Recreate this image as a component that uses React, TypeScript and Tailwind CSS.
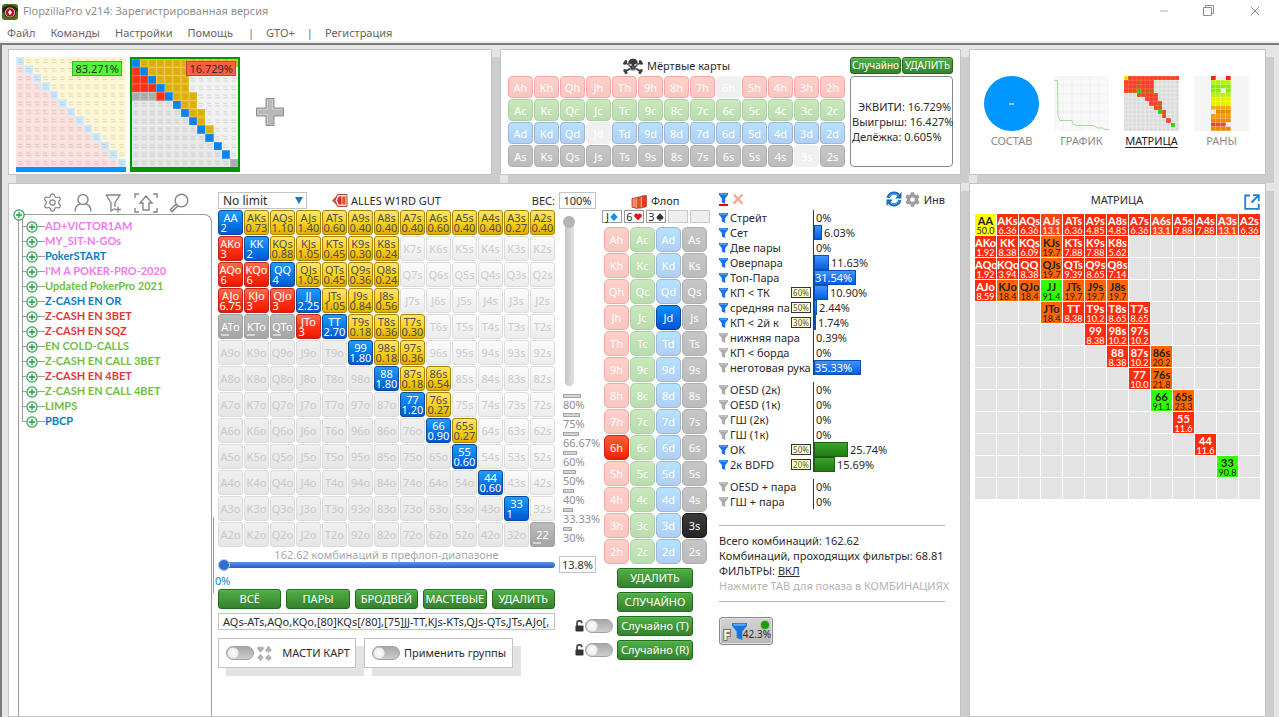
import React from 'react';
import { FaCog } from 'react-icons/fa';
import { Minus, Settings, X } from 'lucide-react';

const RANKS = ['A', 'K', 'Q', 'J', 'T', '9', '8', '7', '6', '5', '4', '3', '2'];
const SUITS = ['h', 'c', 'd', 's'];

const handName = (row: number, col: number) => {
  if (row === col) return RANKS[row] + RANKS[row];
  return row < col ? RANKS[row] + RANKS[col] + 's' : RANKS[col] + RANKS[row] + 'o';
};

// Each row starts at the given column; "-" marks a hand with a zero weight.
const RANGE: [number, string][] = [
  [0, '2 0.73 1.10 1.40 0.60 0.40 0.40 0.40 0.60 0.40 0.40 0.27 0.40'],
  [0, '3 2 0.88 1.05 0.45 0.30 0.24'],
  [0, '6 6 4 1.05 0.45 0.36 0.24'],
  [0, '6.75 3 3 2.25 1.05 0.84 0.56'],
  [0, '- - - 3 2.70 0.18 0.36 0.30'],
  [5, '1.80 0.18 0.36'],
  [6, '1.80 0.18 0.54'],
  [7, '1.20 0.27'],
  [8, '0.90 0.27'],
  [9, '0.60'],
  [10, '0.60'],
  [11, '1'],
  [12, '-'],
];

const MATRIX: [number, string][] = [
  [0, '50.0 6.36 6.36 13.1 6.36 4.85 4.85 6.36 13.1 7.88 7.88 13.1 6.36'],
  [0, '1.92 8.38 6.09 19.7 7.88 7.88 5.62'],
  [0, '1.92 3.94 8.38 19.7 9.39 8.65 7.14'],
  [0, '8.59 18.4 18.4 91.4 19.7 19.7 19.7'],
  [3, '18.4 8.38 10.2 8.65 8.65'],
  [5, '8.38 10.2 10.2'],
  [6, '8.38 10.2 20.2'],
  [7, '10.0 21.8'],
  [8, '91.1 23.3'],
  [9, '11.6'],
  [10, '11.6'],
  [11, '90.8'],
  [13, ''],
];

const valueAt = (data: [number, string][], row: number, col: number): string | undefined => {
  const [start, list] = data[row];
  return list.split(' ')[col - start] || undefined;
};

const heatClass = (v?: string) => {
  if (!v) return 'bg-[#e3e3e3]';
  const n = parseFloat(v);
  if (n > 80) return 'bg-[#33ff00] text-[#222]';
  if (n >= 50) return 'bg-[#ffff00] text-[#222]';
  if (n > 18) return 'bg-[#ff6600] text-[#222]';
  if (n > 12) return 'bg-[#ff4418] text-white';
  return 'bg-[#ff2d0c] text-white';
};

const rangeClass = (row: number, col: number, v?: string) => {
  if (v === '-') return 'border-[#a0a0a0] bg-linear-to-b from-[#bdbdbd] to-[#a4a4a4] text-white';
  if (!v)
    return row < col
      ? 'border-[#dcdcdc] bg-linear-to-b from-[#fbfbfb] to-[#ececec] text-[#cbcbcb]'
      : 'border-[#dadada] bg-linear-to-b from-[#f0f0f0] to-[#e6e6e6] text-[#c8c8c8]';
  if (row === col) return 'border-[#0c4a9c] bg-linear-to-b from-[#1e9cff] to-[#0058d2] text-white';
  if (row < col) return 'border-[#ab8200] bg-linear-to-b from-[#ffe566] via-[#fbd21c] to-[#e0ac00] text-[#4d4d4d]';
  return 'border-[#c0241a] bg-linear-to-b from-[#ff6a4c] via-[#ff3413] to-[#ea1800] text-white';
};

const CARD_CLASS: Record<string, string> = {
  h: 'border-[#f0a9a5] bg-linear-to-b from-[#ffd0c8] to-[#f9c5c0]',
  c: 'border-[#b0d0a8] bg-linear-to-b from-[#cae8bb] to-[#b9dcae]',
  d: 'border-[#a0b4d4] bg-linear-to-b from-[#b4e2ff] to-[#b0cff4]',
  s: 'border-[#adadad] bg-linear-to-b from-[#c6c6c6] to-[#bcbcbc]',
};
const PICKED: Record<string, string> = {
  Jd: 'border-[#0c4a9c] bg-linear-to-b from-[#0a90ff] to-[#0054d4]',
  '6h': 'border-[#d02010] bg-linear-to-b from-[#ff5a36] to-[#f01c00]',
  '3s': 'border-[#1a1a1a] bg-linear-to-b from-[#3a3a3a] to-[#262626]',
};

const SUIT_PATH: Record<string, string> = {
  h: 'M5 9.5L0.9 5A2.5 2.5 0 0 1 5 1.8A2.5 2.5 0 0 1 9.1 5Z',
  d: 'M5 0L9.6 5L5 10L0.4 5Z',
  s: 'M5 0.3L8.9 4.5A2.3 2.3 0 0 1 5.6 7.6L6.6 9.6H3.4L4.4 7.6A2.3 2.3 0 0 1 1.1 4.5Z',
  c: 'M5 0.3A2.1 2.1 0 0 1 6.7 3.7A2.2 2.2 0 1 1 5.6 7.3L6.6 9.6H3.4L4.4 7.3A2.2 2.2 0 1 1 3.3 3.7A2.1 2.1 0 0 1 5 0.3Z',
};

function Suit({ suit, className }: { suit: string; className: string }) {
  return (
    <svg viewBox="0 0 10 10" className={className} fill="currentColor" aria-hidden="true">
      <path d={SUIT_PATH[suit]} />
    </svg>
  );
}

function Funnel({ on, className }: { on: boolean; className: string }) {
  return (
    <svg viewBox="0 0 16 18" className={className} preserveAspectRatio="none" aria-hidden="true">
      <path d="M0 0H16V3L11 9V18L5 15.5V9L0 3Z" fill={on ? '#1673e6' : '#acacac'} />
      <path d="M1 0.8H15L14 3H2Z" fill={on ? '#5aa8ff' : '#c8c8c8'} />
    </svg>
  );
}

function Plus() {
  return (
    <svg viewBox="0 0 12 12" className="size-3 shrink-0" aria-hidden="true">
      <circle cx="6" cy="6" r="5.1" fill="#f4f8f4" stroke="#2e9e4f" strokeWidth="1.2" />
      <path d="M6 3V9M3 6H9" stroke="#1f9a44" strokeWidth="1.3" />
    </svg>
  );
}

function Panel({ children, className = '' }: { children: React.ReactNode; className?: string }) {
  return <section className={'min-w-0 border border-[#c3c3c3] bg-white shadow-[8px_8px_0_#cdcdcd] ' + className}>{children}</section>;
}

function GreenButton({ children, className = '' }: { children: React.ReactNode; className?: string }) {
  return (
    <button
      className={
        'rounded-[3px] border border-[#1f6b1c] bg-linear-to-b from-[#4fb043] to-[#378030] text-center whitespace-nowrap text-white shadow-[inset_0_1px_0_#5fb855] ' +
        className
      }
    >
      {children}
    </button>
  );
}

function Toggle({ label }: { label: string }) {
  return (
    <input
      type="checkbox"
      role="switch"
      aria-label={label}
      className="h-3.5 w-7 shrink-0 appearance-none rounded-full border border-[#a2a2a2] bg-[radial-gradient(circle_at_6px_50%,#fdfdfd_0,#ececec_5px,#ffffff00_6px),linear-gradient(#a8a8a8,#cccccc)]"
    />
  );
}

const TREE: [string, string][] = [
  ['AD+VICTOR1AM', 'text-[#f07af0]'],
  ['MY_SIT-N-GOs', 'text-[#f07af0]'],
  ['PokerSTART', 'text-[#0a7cc8]'],
  ["I'M A POKER-PRO-2020", 'text-[#f07af0]'],
  ['Updated PokerPro 2021', 'text-[#72bf44]'],
  ['Z-CASH EN OR', 'text-[#0a7cc8]'],
  ['Z-CASH EN 3BET', 'text-[#dd3a3a]'],
  ['Z-CASH EN SQZ', 'text-[#dd3a3a]'],
  ['EN COLD-CALLS', 'text-[#72bf44]'],
  ['Z-CASH EN CALL 3BET', 'text-[#72bf44]'],
  ['Z-CASH EN 4BET', 'text-[#dd3a3a]'],
  ['Z-CASH EN CALL 4BET', 'text-[#72bf44]'],
  ['LIMPS', 'text-[#72bf44]'],
  ['PBCP', 'text-[#0a7cc8]'],
];

function Tree() {
  return (
    <aside className="flex w-[203px] shrink-0 flex-col pl-[9px]">
      <div className="flex h-[30px] items-end gap-[11px] pb-px pl-6 text-[#858585]">
        <Settings className="size-[21px]" strokeWidth={1.4} />
        <svg viewBox="0 0 18 20" className="h-5 w-[18px]" fill="none" stroke="currentColor" strokeWidth="1.4" aria-hidden="true">
          <circle cx="9" cy="6.5" r="5" />
          <path d="M1 18.5C1.2 13.5 4 11.5 6 11M17 18.5C16.8 13.5 14 11.5 12 11" />
        </svg>
        <svg viewBox="0 0 20 20" className="size-5" fill="none" stroke="currentColor" strokeWidth="1.3" aria-hidden="true">
          <path d="M3 2H17L12 9.5V14M3 2L8 9.5V18L12 15.5M12 16.5H18M15 13.5V19.5" />
        </svg>
        <svg viewBox="0 0 24 20" className="h-5 w-6" fill="none" stroke="currentColor" strokeWidth="1.4" aria-hidden="true">
          <path d="M1 5V1H5M19 1H23V5M23 15V19H19M5 19H1V15M12 3L18 10H15V17H9V10H6Z" />
        </svg>
        <svg viewBox="0 0 20 20" className="size-5" fill="none" stroke="currentColor" strokeWidth="1.4" aria-hidden="true">
          <circle cx="12.5" cy="7.5" r="6.3" />
          <path d="M7.2 11.2L1.4 16.6L3 18.6L8.9 13" />
        </svg>
      </div>
      <div className="relative grow rounded-tr-lg border-t border-r border-l border-[#9c9c9c] pt-1">
        <span className="absolute -top-[6px] -left-[6px]">
          <Plus />
        </span>
        <span className="absolute top-[302px] -right-[3px] h-[76px] w-[3px] border-r border-[#9c9c9c]" />
        <ul className="relative pl-[3px]">
          {TREE.map(([name, color], i) => (
            <li key={name} className="flex h-[15px] items-center">
              <span className={'w-px self-start bg-[#9c9c9c] ' + (i === TREE.length - 1 ? 'h-2' : 'h-[15px]')} />
              <span className="h-px w-[3px] bg-[#9c9c9c]" />
              <Plus />
              <span className="h-px w-[7px] bg-[#9c9c9c]" />
              <span className={'font-[Lato] text-[11px] font-bold whitespace-nowrap ' + color}>{name}</span>
            </li>
          ))}
        </ul>
      </div>
    </aside>
  );
}

const WEIGHTS: [string, string][] = [
  ['80%', 'w-[18px]'],
  ['75%', 'w-[17px]'],
  ['66.67%', 'w-4'],
  ['60%', 'w-3.5'],
  ['50%', 'w-[13px]'],
  ['40%', 'w-[11px]'],
  ['33.33%', 'w-2.5'],
  ['30%', 'w-[9px]'],
];

function RangeEditor() {
  return (
    <div className="grid shrink-0 grid-cols-[337px_38px] content-start gap-x-1 pt-2 pl-1.5">
      <div className="flex h-[18px] items-start">
        <div className="relative">
          <select aria-label="Лимит" className="block h-[17px] w-[89px] appearance-none border border-[#c3c3c3] bg-white pl-1 text-xs leading-3">
            <option>No limit</option>
          </select>
          <svg viewBox="0 0 8 7" className="pointer-events-none absolute top-[5px] right-1 h-[7px] w-2" aria-hidden="true">
            <path d="M0 0H8L4 7Z" fill="#0a7cc8" />
          </svg>
        </div>
        <svg viewBox="0 0 16 13" className="mt-0.5 ml-[25px] h-[13px] w-4" aria-hidden="true">
          <path d="M0 6.5L6 0.5V12.5Z" fill="#c8503c" />
          <path d="M5.5 0.5H15V12.5H5.5L3 6.5Z" fill="#f4ded8" stroke="#b04a3a" />
          <path d="M7 2.5H9.5V10.5H7L5 6.5Z" fill="#e22c10" />
          <path d="M10.3 2.5H13.5V10.5H10.3Z" fill="#ff4a1c" />
        </svg>
        <span className="ml-[3px] grow leading-[17px] whitespace-nowrap">ALLES W1RD GUT</span>
        <label htmlFor="weight" className="leading-[17px]">ВЕС:</label>
      </div>
      <input id="weight" defaultValue="100%" className="h-[17px] w-[37px] border border-[#c3c3c3] text-center" />

      <div className="grid grid-cols-[repeat(13,25px)] gap-px">
        {RANKS.map((_, r) =>
          RANKS.map((_, c) => {
            const v = valueAt(RANGE, r, c);
            const active = v && v !== '-';
            return (
              <button
                key={handName(r, c)}
                className={'relative flex h-[25px] flex-col items-center justify-center rounded-[3px] border leading-[10px] ' + rangeClass(r, c, v)}
              >
                <span>{handName(r, c)}</span>
                {active && <span className={v.length === 1 ? 'w-5 text-left' : ''}>{v}</span>}
                {v === '-' && <span className="absolute bottom-0.5 left-0.5 h-0.5 w-2 bg-[#d6d6d6]" />}
              </button>
            );
          }),
        )}
      </div>
      <div className="flex flex-col pt-1.5 pl-1">
        <input
          type="range"
          aria-label="Вес"
          defaultValue={100}
          className="h-[170px] w-3 appearance-none rounded-full bg-transparent [direction:rtl] [writing-mode:vertical-lr] [&::-webkit-slider-runnable-track]:w-[9px] [&::-webkit-slider-runnable-track]:rounded-full [&::-webkit-slider-runnable-track]:bg-linear-to-r [&::-webkit-slider-runnable-track]:from-[#c4c4c4] [&::-webkit-slider-runnable-track]:to-[#e2e2e2] [&::-webkit-slider-thumb]:-ml-[2px] [&::-webkit-slider-thumb]:size-3 [&::-webkit-slider-thumb]:appearance-none [&::-webkit-slider-thumb]:rounded-full [&::-webkit-slider-thumb]:bg-[#b4b4b4]"
        />
        <ul className="mt-2 text-[11px] text-[#8f8f8f]">
          {WEIGHTS.map(([t, w]) => (
            <li key={t} className="h-[19px]">
              <span className={'block h-1 border border-[#a6a6a6] bg-[#d6d6d6] ' + w} />
              <span className="block leading-[13px]">{t}</span>
            </li>
          ))}
        </ul>
      </div>

      <div className="pt-0.5 text-center text-[#a8a8a8]">
        <div className="h-3 leading-3">162.62 комбинаций в префлоп-диапазоне</div>
        <input
          type="range"
          aria-label="Диапазон"
          defaultValue={0}
          className="block h-2 w-full appearance-none bg-transparent [&::-webkit-slider-runnable-track]:h-[6px] [&::-webkit-slider-runnable-track]:rounded-full [&::-webkit-slider-runnable-track]:bg-linear-to-b [&::-webkit-slider-runnable-track]:from-[#5a96e8] [&::-webkit-slider-runnable-track]:to-[#2060c4] [&::-webkit-slider-thumb]:-mt-[3px] [&::-webkit-slider-thumb]:size-3 [&::-webkit-slider-thumb]:appearance-none [&::-webkit-slider-thumb]:rounded-full [&::-webkit-slider-thumb]:border [&::-webkit-slider-thumb]:border-[#c0ccdd] [&::-webkit-slider-thumb]:bg-[#2f6fd4]"
        />
      </div>
      <input aria-label="Процент" defaultValue="13.8%" className="mt-[9px] h-[17px] w-[37px] border border-[#c3c3c3] text-center" />

      <div className="col-span-2 -ml-[3px] h-4 leading-[15px] text-[#0a84d0]">0%</div>
      <div className="grid grid-cols-5 gap-[5px]">
        {['ВСЁ', 'ПАРЫ', 'БРОДВЕЙ', 'МАСТЕВЫЕ', 'УДАЛИТЬ'].map((t) => (
          <GreenButton key={t} className="h-5 leading-[18px]">{t}</GreenButton>
        ))}
      </div>
      <span />
      <input
        aria-label="Текст диапазона"
        defaultValue="AQs-ATs,AQo,KQo,[80]KQs[/80],[75]JJ-TT,KJs-KTs,QJs-QTs,JTs,AJo[,"
        className="mt-1 h-[17px] w-full border border-[#c3c3c3] pl-1 text-[11px]"
      />
      <span />
      <div className="mt-2 flex gap-2">
        <label className="flex h-[30px] w-[138px] items-center border border-[#c3c3c3] bg-white pl-[7px] shadow-[8px_8px_0_#e3e3e3]">
          <Toggle label="МАСТИ КАРТ" />
          <span className="ml-[3px] grid grid-cols-2 gap-px text-[#b0b0b0]">
            <Suit suit="h" className="size-[7px]" />
            <Suit suit="c" className="size-[7px]" />
            <Suit suit="d" className="size-[7px]" />
            <Suit suit="s" className="size-[7px]" />
          </span>
          <span className="ml-auto pr-[5px] whitespace-nowrap">МАСТИ КАРТ</span>
        </label>
        <label className="flex h-[30px] w-[149px] items-center gap-1 border border-[#c3c3c3] bg-white pl-[7px] whitespace-nowrap shadow-[8px_8px_0_#e3e3e3]">
          <Toggle label="Применить группы" />
          Применить группы
        </label>
      </div>
    </div>
  );
}

function Lock() {
  return (
    <svg viewBox="0 0 9 12" className="h-3 w-[9px]" aria-hidden="true">
      <path d="M2 6V3.2A2.3 2.3 0 0 1 6.8 3.2" fill="none" stroke="#333" strokeWidth="1.5" />
      <rect x="0.5" y="5.5" width="8" height="6" rx="0.8" fill="#333" />
    </svg>
  );
}

function Flop() {
  const cards: [string, string, string][] = [
    ['J', 'd', 'text-[#0a90ff]'],
    ['6', 'h', 'text-[#e81010]'],
    ['3', 's', 'text-[#333]'],
    ['', '', ''],
    ['', '', ''],
  ];
  return (
    <div className="-ml-[23px] flex w-[135px] shrink-0 flex-col pt-[9px] pl-[28px]">
      <div className="flex h-[17px] items-center gap-1 pl-[29px]">
        <svg viewBox="0 0 16 14" className="h-3.5 w-4" aria-hidden="true">
          <g stroke="#a8331c" strokeWidth="0.8">
            <path d="M1 3.5L5 3V13.2L1 12.2Z" fill="#ff8a60" />
            <path d="M5 2.5L10 1.8V13L5 13.2Z" fill="#f04c24" />
            <path d="M10 1.2L15.4 0.5V11.5L10 13Z" fill="#e83a14" />
          </g>
          <path d="M5.2 3V12.8M10.2 1.8V12.6" stroke="#ffe0d4" strokeWidth="0.9" />
        </svg>
        Флоп
      </div>
      <div className="mb-1 grid grid-cols-[repeat(5,20px)] gap-0.5">
        {cards.map(([r, s, color], i) => (
          <span key={i} className={'flex h-[13px] items-center justify-center border leading-[11px] ' + (r ? 'border-[#9c9c9c] bg-white' : 'border-[#c8c8c8] bg-[#eeeeee]')}>
            {r}
            {s && <span className={color}><Suit suit={s} className="ml-px size-2" /></span>}
          </span>
        ))}
      </div>
      <div className="grid grid-cols-[repeat(4,25px)] gap-px pl-0.5">
        {RANKS.map((r) =>
          SUITS.map((s) => (
            <button key={r + s} className={'h-[25px] rounded-[5px] border leading-none text-white ' + (PICKED[r + s] || CARD_CLASS[s])}>
              {r + s}
            </button>
          )),
        )}
      </div>
      <div className="mt-1 -ml-[27px] flex flex-col items-end gap-1 pr-4">
        <GreenButton className="h-5 w-[76px] leading-[18px]">УДАЛИТЬ</GreenButton>
        <GreenButton className="h-5 w-[76px] leading-[18px]">СЛУЧАЙНО</GreenButton>
        {['Случайно (T)', 'Случайно (R)'].map((t) => (
          <div key={t} className="flex items-center">
            <Lock />
            <span className="mr-1 ml-px flex"><Toggle label={t} /></span>
            <GreenButton className="h-5 w-[76px] leading-[18px]">{t}</GreenButton>
          </div>
        ))}
      </div>
    </div>
  );
}

type Stat = { name: string; v: number; label: string; on?: boolean; w?: string };
const GROUPS: { line: string; bar: string; rows: Stat[] }[] = [
  {
    line: 'border-[#0c3f94]',
    bar: 'border-[#0c4fb4] bg-linear-to-b from-[#3c94ff] to-[#0a5ce0]',
    rows: [
      { name: 'Стрейт', v: 0, label: '0%', on: true },
      { name: 'Сет', v: 6.03, label: '6.03%', on: true },
      { name: 'Две пары', v: 0, label: '0%', on: true },
      { name: 'Оверпара', v: 11.63, label: '11.63%', on: true },
      { name: 'Топ-Пара', v: 31.54, label: '31.54%', on: true },
      { name: 'КП < ТК', v: 10.9, label: '10.90%', on: true, w: '60%' },
      { name: 'средняя па', v: 2.44, label: '2.44%', on: true, w: '50%' },
      { name: 'КП < 2й к', v: 1.74, label: '1.74%', on: true, w: '30%' },
      { name: 'нижняя пара', v: 0.39, label: '0.39%' },
      { name: 'КП < борда', v: 0, label: '0%' },
      { name: 'неготовая рука', v: 35.33, label: '35.33%' },
    ],
  },
  {
    line: 'border-[#1d5c12]',
    bar: 'border-[#1d5c12] bg-linear-to-b from-[#3aa42a] to-[#1e7c10]',
    rows: [
      { name: 'OESD (2к)', v: 0, label: '0%' },
      { name: 'OESD (1к)', v: 0, label: '0%' },
      { name: 'ГШ (2к)', v: 0, label: '0%' },
      { name: 'ГШ (1к)', v: 0, label: '0%' },
      { name: 'ОК', v: 25.74, label: '25.74%', on: true, w: '50%' },
      { name: '2к BDFD', v: 15.69, label: '15.69%', on: true, w: '20%' },
    ],
  },
  {
    line: 'border-[#5a1478]',
    bar: 'bg-[#5a1478]',
    rows: [
      { name: 'OESD + пара', v: 0, label: '0%' },
      { name: 'ГШ + пара', v: 0, label: '0%' },
    ],
  },
];

function Stats() {
  return (
    <div className="max-w-[246px] min-w-0 grow pt-2 pl-2.5">
      <div className="flex h-[18px] items-center pr-2.5">
        <span className="-mt-1 border-b-2 border-[#f00000]">
          <Funnel on className="h-[11px] w-[9px]" />
        </span>
        <svg viewBox="0 0 12 12" className="-mt-1 ml-1 size-3" aria-hidden="true">
          <path d="M1 2L3 1L6 4.5L9.5 0.8L11.4 2L7.7 6L11.2 10L9.6 11.4L6 7.8L2.6 11.4L0.6 10L4.2 6Z" fill="#f8a698" />
        </svg>
        <svg viewBox="0 0 16 16" className="-mt-1 ml-auto size-4" aria-hidden="true">
          <path d="M2.2 7A6 6 0 0 1 12.5 4M13.8 9A6 6 0 0 1 3.5 12" fill="none" stroke="#1a6cc0" strokeWidth="3.2" />
          <path d="M15.5 1V7.5H9ZM0.5 15V8.5H7Z" fill="#1a6cc0" />
          <path d="M2.8 6.4A5.6 5.6 0 0 1 11.5 4M13.2 9.6A5.6 5.6 0 0 1 4.5 12" fill="none" stroke="#5cb0f0" />
        </svg>
        <FaCog className="-mt-1 ml-[3px] size-[15px] text-[#9c9c9c]" />
        <span className="-mt-0.5 ml-1">Инв</span>
      </div>
      {GROUPS.map((g, gi) => (
        <div key={gi} className={gi ? 'mt-[7px]' : ''}>
          {g.rows.map((s) => (
            <div key={s.name} className="flex h-[15px] items-center leading-[15px]">
              <Funnel on={!!s.on} className="h-2.5 w-[9px] shrink-0" />
              <span className="mr-0.5 ml-0.5 flex w-[81px] shrink-0 items-center overflow-hidden whitespace-nowrap">
                <span className="w-[61px] shrink-0">{s.name}</span>
                {s.w && <span className="h-[11px] w-5 shrink-0 border border-[#333] bg-[#ffffc8] text-center text-[8px] leading-[9px] text-[#555]">{s.w}</span>}
              </span>
              <span className={'flex h-[15px] items-center border-l ' + g.line}>
                {s.v >= 1 && (
                  <span className={'flex h-[15px] items-center border text-white ' + g.bar} style={{ width: Math.round(s.v * 1.32) }}>
                    {s.v > 30 && <span>{s.label}</span>}
                  </span>
                )}
                {s.v <= 30 && <span className="pl-0.5">{s.label}</span>}
              </span>
            </div>
          ))}
        </div>
      ))}
      <hr className="mt-4 mr-2.5 border-[#b4b4b4]" />
      <div className="pt-[7px] pb-2 leading-[15px] whitespace-nowrap">
        <p>Всего комбинаций: 162.62</p>
        <p>Комбинаций, проходящих фильтры: 68.81</p>
        <p>ФИЛЬТРЫ: <a href="#filters" className="underline">ВКЛ</a></p>
        <p className="text-[#b4b4b4]">Нажмите TAB для показа в КОМБИНАЦИЯХ</p>
      </div>
      <hr className="mr-2.5 border-[#b4b4b4]" />
      <button className="relative mt-[15px] flex h-7 w-[54px] items-center rounded-[3px] border border-[#8c8c8c] bg-linear-to-b from-[#d4d4d4] to-[#b8b8b8] pl-[3px] shadow-[inset_0_0_0_1px_#e0e0e0]">
        <span className="self-end text-sm leading-[18px] font-bold text-[#fff8e0] [-webkit-text-stroke:2px_#6c6c6c] [paint-order:stroke]">F</span>
        <Funnel on className="ml-px h-[17px] w-[15px]" />
        <span className="absolute right-px bottom-[3px] text-[10px] leading-[14px]">42.3%</span>
        <span className="absolute top-[3px] right-[3px] size-2 rounded-full bg-[#1f9a10] ring-1 ring-[#9cc896]" />
      </button>
    </div>
  );
}

function Matrix() {
  return (
    <Panel className="px-1 pt-[5px]">
      <div className="flex h-[22px] items-center pr-px">
        <h2 className="grow pl-4 text-center">МАТРИЦА</h2>
        <svg viewBox="0 0 16 16" className="mt-1 size-4" fill="none" stroke="#1f7fd0" strokeWidth="1.8" aria-hidden="true">
          <path d="M6 1.5H1.2V14.8H14.8V10M9 1.2H14.8V7M14 2L7.5 8.5" />
        </svg>
      </div>
      <table className="mt-0.5 w-full table-fixed border-separate border-spacing-px">
        <tbody>
          {RANKS.map((_, r) => (
            <tr key={r}>
              {RANKS.map((_, c) => {
                const v = valueAt(MATRIX, r, c);
                return (
                  <td key={c} className={'h-[21px] p-0 text-center ' + heatClass(v)}>
                    {v && (
                      <>
                        <div className="font-[Lato] text-[11px] leading-[11px] font-bold">{handName(r, c)}</div>
                        <div className="font-[Lato] text-[9px] leading-[9px]">{v}</div>
                      </>
                    )}
                  </td>
                );
              })}
            </tr>
          ))}
        </tbody>
      </table>
    </Panel>
  );
}

// Thumbnail of the 13x13 grid: a 10-unit cell with two faint strokes in it.
function MiniGrid({ fill, className }: { fill: (r: number, c: number) => string; className: string }) {
  return (
    <svg viewBox="0 0 130 130" className={className} preserveAspectRatio="none" aria-hidden="true">
      <g shapeRendering="crispEdges">
        {RANKS.map((_, r) => RANKS.map((_, c) => <rect key={r + '-' + c} x={c * 10} y={r * 10} width="10" height="10" fill={fill(r, c)} />))}
      </g>
      <path
        d={RANKS.map((_, i) => `M${i * 10} 0V130M0 ${i * 10}H130`).join('')}
        stroke="#ffffff"
        strokeWidth="0.8"
        opacity="0.45"
      />
      {RANKS.map((_, r) =>
        RANKS.map((_, c) => (
          <path key={r + 't' + c} d={`M${c * 10 + 2} ${r * 10 + 3.5}h5M${c * 10 + 2.5} ${r * 10 + 6.5}h5`} stroke="#555555" strokeWidth="1.2" opacity="0.16" />
        )),
      )}
    </svg>
  );
}

const fullFill = (r: number, c: number) => (r === c ? '#cce8fb' : r < c ? '#fdf6d2' : '#fbdfdc');
const rangeFill = (r: number, c: number) => {
  const v = valueAt(RANGE, r, c);
  if (v === '-') return '#b0b0b0';
  if (!v) return r < c ? '#f0f0f0' : '#e4e4e4';
  return r === c ? '#0a84f0' : r < c ? '#e2b40c' : '#fc3214';
};
const matrixFill = (r: number, c: number) => {
  const v = valueAt(MATRIX, r, c);
  if (!v) return '#e3e3e3';
  const n = parseFloat(v);
  return n > 80 ? '#22d814' : n >= 50 ? '#f0e800' : n > 18 ? '#d85a10' : '#ff4028';
};

function RunoutThumb() {
  const colors = ['#f02818', '#b4f400', '#86ec00', '#86ec00', '#b4f400', '#e8f000', '#e8f000', '#f0b000', '#ec8800', '#f0a000', '#ec8800', '#f04c18', '#ec8800'];
  const holes = ['0-1', '0-2', '3-2', '8-0', '11-3'];
  return (
    <svg viewBox="0 0 55 55" className="size-[55px]" aria-hidden="true">
      <rect width="55" height="55" fill="#f5f5f5" />
      {colors.map((color, r) =>
        [0, 1, 2, 3].map((c) => (
          <rect key={r + '-' + c} x={17 + c * 5} y={r * 4.23} width="4.7" height="4" fill={holes.includes(r + '-' + c) ? '#f0f0f0' : color} />
        )),
      )}
    </svg>
  );
}

function Views() {
  const items: [string, React.ReactNode][] = [
    [
      'СОСТАВ',
      <span className="flex size-[55px] items-center justify-center rounded-full bg-[#0096ff]">
        <span className="h-0.5 w-[5px] bg-[#8cccff]" />
      </span>,
    ],
    [
      'ГРАФИК',
      <svg viewBox="0 0 55 55" className="size-[55px]" fill="none" aria-hidden="true">
        <rect width="55" height="55" fill="#f8f8f8" />
        <path d="M9 0V55M18 0V55M27 0V55M36 0V55M45 0V55M0 9H55M0 18H55M0 27H55M0 36H55M0 45H55" stroke="#f0f0f0" />
        <path d="M0 4.5H3.5L4 40L6 44.5H18L19 48L23 49.5H39L44 52H49L51 53.5H55" stroke="#a8dba0" />
      </svg>,
    ],
    ['МАТРИЦА', <MiniGrid fill={matrixFill} className="size-[55px]" />],
    ['РАНЫ', <RunoutThumb />],
  ];
  return (
    <Panel className="flex items-center justify-center gap-[15px] pr-0.5 pb-px">
      {items.map(([name, pic]) => (
        <button key={name} className={'flex w-[55px] flex-col items-center gap-1 ' + (name === 'МАТРИЦА' ? 'text-[#222] underline underline-offset-2' : 'text-[#8a8a8a]')}>
          {pic}
          <span className="leading-3">{name}</span>
        </button>
      ))}
    </Panel>
  );
}

function Players() {
  return (
    <Panel className="flex gap-1 pt-[7px] pb-0.5 pl-[7px]">
      <button className="relative flex w-[110px] flex-col border-b-5 border-[#0096ff]">
        <MiniGrid fill={fullFill} className="w-full grow" />
        <span className="absolute top-1 right-1 h-[15px] border border-[#3cb42c] bg-[#55f53a] px-0.5 leading-[14px]">83.271%</span>
      </button>
      <button className="relative flex w-[110px] flex-col border-2 border-b-5 border-[#009600]">
        <MiniGrid fill={rangeFill} className="w-full grow" />
        <span className="absolute top-0.5 right-0.5 h-[15px] border border-[#c84430] bg-[#ff6044] px-0.5 leading-[14px]">16.729%</span>
      </button>
      <button aria-label="Добавить игрока" className="mt-[-5px] ml-3 self-center">
        <svg viewBox="0 0 28 28" className="size-7" aria-hidden="true">
          <path d="M10 0.5H18V10H27.5V18H18V27.5H10V18H0.5V10H10Z" fill="#b8b8b8" stroke="#8f8f8f" />
          <path d="M11.5 26V16.5H2V11.5H11.5V2H16.5V11.5H26" fill="none" stroke="#cccccc" />
        </svg>
      </button>
    </Panel>
  );
}

function Skull() {
  return (
    <svg viewBox="0 0 20 16" className="h-4 w-5" aria-hidden="true">
      <path d="M2 4.5L18 13.5M18 4.5L2 13.5" stroke="#3a3a3a" strokeWidth="2" />
      <g fill="#3a3a3a">
        <circle cx="1.6" cy="5.2" r="1.5" />
        <circle cx="2.8" cy="3.4" r="1.5" />
        <circle cx="18.4" cy="5.2" r="1.5" />
        <circle cx="17.2" cy="3.4" r="1.5" />
        <circle cx="1.8" cy="12.6" r="1.5" />
        <circle cx="3" cy="14.4" r="1.5" />
        <circle cx="18.2" cy="12.6" r="1.5" />
        <circle cx="17" cy="14.4" r="1.5" />
      </g>
      <path d="M10 0.4C13.4 0.4 15 2.6 15 5.2C15 7.4 14.2 8.8 12.8 9.4V12.4H7.2V9.4C5.8 8.8 5 7.4 5 5.2C5 2.6 6.6 0.4 10 0.4Z" fill="#3a3a3a" stroke="#ffffff" strokeWidth="0.5" />
      <path d="M6.4 5.6L9 6.4L8.4 8L6.6 7.6ZM13.6 5.6L11 6.4L11.6 8L13.4 7.6ZM10 8.2L10.7 9.6H9.3ZM8.6 10.8H9.2V12H8.6ZM10.8 10.8H11.4V12H10.8Z" fill="#d8d8d8" />
    </svg>
  );
}

function DeadCards() {
  const used = ['6h', 'Jd', '3s'];
  return (
    <Panel className="flex justify-between py-1.5 pr-[7px] pl-[7px]">
      <div>
        <div className="flex h-5 items-center justify-center gap-1">
          <Skull />
          Мёртвые карты
        </div>
        <div className="grid grid-cols-[repeat(13,25px)] gap-px">
          {SUITS.map((s) =>
            RANKS.map((r) => (
              <button
                key={r + s}
                className={'h-[22px] rounded-[4px] border leading-none text-white ' + (used.includes(r + s) ? 'border-[#f0f0f0] bg-[#f0f0f0]' : CARD_CLASS[s])}
              >
                {r + s}
              </button>
            )),
          )}
        </div>
      </div>
      <div className="flex w-[103px] flex-col gap-0.5">
        <div className="grid grid-cols-2 gap-px pt-px text-[10px]">
          <GreenButton className="h-[17px] leading-[15px]">Случайно</GreenButton>
          <GreenButton className="h-[17px] leading-[15px]">УДАЛИТЬ</GreenButton>
        </div>
        <div className="flex h-[91px] flex-col justify-center rounded-[4px] border border-[#8a8a8a] px-px leading-[15px] whitespace-nowrap">
          <p className="pl-1.5">ЭКВИТИ: 16.729%</p>
          <p>Выигрыш: 16.427%</p>
          <p>Делёжка: 0.605%</p>
        </div>
      </div>
    </Panel>
  );
}

export default function App() {
  return (
    <div className="flex h-screen flex-col overflow-hidden bg-white font-['Noto_Sans','Liberation_Sans',sans-serif] text-[11px] text-[#2b2b2b]">
      <header className="flex h-[23px] items-center pl-0.5 text-[#8f8f8f]">
        <svg viewBox="0 0 16 16" className="size-4" aria-hidden="true">
          <rect width="16" height="16" rx="3" fill="#4c7020" />
          <path d="M0 5C4 0 11 0 16 5V8C11 2 5 3 1 9Z" fill="#1c2c10" />
          <circle cx="8" cy="8.5" r="5.8" fill="#3a1414" />
          <circle cx="8" cy="8.5" r="5" fill="#e8d8cc" />
          <circle cx="8" cy="8.5" r="4.2" fill="#b80c1c" />
          <path d="M8 5.8L10 8.5L8 11.2L6 8.5Z" fill="#ffffff" />
        </svg>
        <span className="ml-[5px] grow">FlopzillaPro v214: Зарегистрированная версия</span>
        <div className="flex items-center gap-[33px] pr-4 pb-0.5">
          <button aria-label="Свернуть"><Minus className="size-3" strokeWidth={1.6} /></button>
          <button aria-label="Развернуть">
            <svg viewBox="0 0 11 11" className="size-[11px]" fill="none" stroke="currentColor" aria-hidden="true">
              <path d="M0.5 2.5H8.5V10.5H0.5ZM2.5 2.5V0.5H10.5V8.5H8.5" />
            </svg>
          </button>
          <button aria-label="Закрыть"><X className="size-4" strokeWidth={1.5} /></button>
        </div>
      </header>
      <nav className="flex h-5 items-center gap-[15px] border-b-2 border-[#f0f0f0] pt-0.5 pl-[7px] text-[#666]">
        <a href="#file">Файл</a>
        <a href="#commands">Команды</a>
        <a href="#settings">Настройки</a>
        <a href="#help">Помощь</a>
        <div className="flex gap-3">
          <span>|</span>
          <a href="#gto">GTO+</a>
          <span>|</span>
          <a href="#register">Регистрация</a>
        </div>
      </nav>
      <main className="grid min-h-0 grow grid-cols-[484fr_461fr_297fr] grid-rows-[126px_1fr] gap-2 overflow-hidden border-t-2 border-l-2 border-[#7c7c7c] bg-[#e5e5e5] pt-1 pr-[13px] pl-1.5">
        <Players />
        <DeadCards />
        <Views />
        <Panel className="col-span-2 flex overflow-hidden">
          <Tree />
          <RangeEditor />
          <Flop />
          <Stats />
        </Panel>
        <Matrix />
      </main>
    </div>
  );
}
